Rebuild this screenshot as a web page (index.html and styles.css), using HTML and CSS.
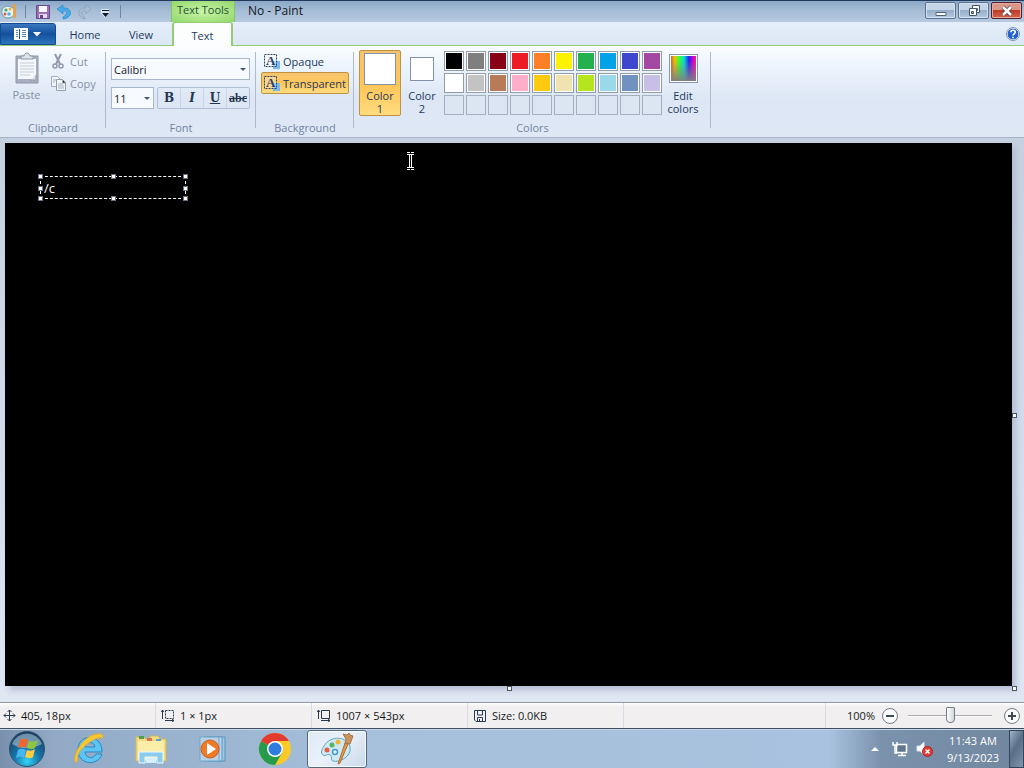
FILE: index.html
```html
<!DOCTYPE html>
<html lang="en">
<head>
<meta charset="utf-8">
<title>No - Paint</title>
<link rel="stylesheet" href="styles.css">
</head>
<body>
<header class="titlebar">
  <div class="quick">
    <svg class="app-icon" width="18" height="20" viewBox="0 0 18 20"><path d="M3 6C6 3 13 4 14 8s-1 8-6 8-8-5-5-10z" fill="#e3f3f5" stroke="#6c9cae"/><circle cx="6" cy="8" r="1.6" fill="#51a45c"/><circle cx="10" cy="7" r="1.5" fill="#e7b23d"/><circle cx="5" cy="12" r="1.5" fill="#d65b4b"/><circle cx="9" cy="12" r="1.8" fill="#60aee0"/><path d="M13 2h3v13l-2 2-1-3z" fill="#e5a24e"/></svg>
    <span class="bar"></span>
    <button class="qbtn" aria-label="Save"><svg width="16" height="16" viewBox="0 0 16 16"><path d="M2.500 1.500h13v13h-13z" fill="#9a70b4" stroke="#674b91"/><path d="M5 2h8v6H5z" fill="#f7f8ff"/><path d="M5 10h8v4H5z" fill="#e6d9ef"/><path d="M6 11h3v3H6z" fill="#624284"/></svg></button>
    <button class="qbtn" aria-label="Undo"><svg width="16" height="16" viewBox="0 0 16 16"><path d="M8 1 2 5l6 5V7c4-1 5 3 0 6v2c10-1 10-12 0-11z" fill="#4ba9e7" stroke="#2c8fd3" stroke-width=".8"/></svg></button>
    <button class="qbtn" aria-label="Redo" disabled><svg width="16" height="16" viewBox="0 0 16 16"><path d="m10 1 5 4-5 5V7c-5-1-6 3-1 6v2C1 14 0 3 10 4z" fill="#a8bbd1" stroke="#8da4bf" stroke-width=".8"/></svg></button>
    <button class="qbtn" aria-label="Customize Quick Access Toolbar"><svg width="16" height="16" viewBox="0 0 16 16"><path d="M4 5h8v3H4zM3 8h10l-5 6z" fill="#dce7f4"/><path d="M5 6h7v1H5zM5 9h7l-3.500 4z" fill="#101c30"/></svg></button>
    <span class="bar"></span>
  </div>
  <div class="context-title">Text Tools</div>
  <h1 class="title">No - Paint</h1>
  <div class="window-buttons">
    <button class="wbtn" aria-label="Minimize"><svg width="14" height="12" viewBox="0 0 14 12"><path d="M2 7.500h10v3H2z" fill="#fff" stroke="#52647d"/></svg></button>
    <button class="wbtn" aria-label="Restore"><svg width="14" height="12" viewBox="0 0 14 12"><path d="M5.500.5h7v7h-7z" fill="#fff" stroke="#44566f"/><path d="M8.500 3.500h2v2h-2z" fill="#9fb3cb" stroke="#44566f"/><path d="M2.500 3.500h7v7h-7z" fill="#fff" stroke="#44566f"/><path d="M4.500 6.500h2v2h-2z" fill="#9fb3cb" stroke="#44566f"/></svg></button>
    <button class="wbtn close" aria-label="Close"><svg width="14" height="12" viewBox="0 0 14 12"><path d="m3 2 8 8M11 2l-8 8" stroke="#613a41" stroke-width="4"/><path d="m3 2 8 8M11 2l-8 8" stroke="#fff" stroke-width="2.500"/></svg></button>
  </div>
</header>

<nav class="tabs">
  <button class="file-tab" aria-label="Paint menu"><svg width="30" height="12" viewBox="0 0 30 12"><path d="M1 0h14v12H1z" fill="#fff"/><path d="M3 2.500h2M3 4.500h2M3 6.500h2M3 8.500h2M9 2.500h4M9 4.500h4M9 6.500h4M9 8.500h4" stroke="#5a85b8"/><path d="M6.500 1v10" stroke="#1b559e"/><path d="M20 4h8l-4 4.500z" fill="#fff"/></svg></button>
  <button class="tab home">Home</button>
  <button class="tab view">View</button>
  <button class="tab active">Text</button>
  <button class="help" aria-label="Help"><svg width="14" height="14" viewBox="0 0 14 14"><circle cx="7" cy="7" r="6" fill="#2564ce" stroke="#fff"/><circle cx="7" cy="7" r="6.500" fill="none" stroke="#7d92b4"/><path d="M4.800 5.300c0-3 4.600-2.600 4.500 0C9.300 6.700 7 6.800 7 8.500M7 9.800v1.500" fill="none" stroke="#fff" stroke-width="1.600"/></svg></button>
</nav>

<section class="ribbon">
  <div class="group clipboard">
    <div class="group-body">
      <button class="paste" disabled><svg width="28" height="32" viewBox="0 0 28 32"><path d="M3 4h22v27H3z" fill="#a6b0bf" stroke="#8e98a8"/><path d="M5 7h18v20H5z" fill="#f4f7fc"/><path d="M8 7V4h3c0-4 6-4 6 0h3v3z" fill="#dce2eb" stroke="#8c97a6"/><path d="M7 11h14M7 14h14M7 17h14M7 20h14M7 23h10" stroke="#c5ccd8"/><path d="M17 28h6v-5" fill="#d9e0eb" stroke="#8e98a8"/></svg><span>Paste</span></button>
      <div class="stack">
        <button class="cmd" disabled><svg width="16" height="16" viewBox="0 0 16 16"><path d="m4 1 5 10M10 1 5 11" stroke="#8f99a9" stroke-width="2"/><circle cx="4" cy="13" r="2" fill="none" stroke="#8f99a9" stroke-width="1.500"/><circle cx="10" cy="13" r="2" fill="none" stroke="#8f99a9" stroke-width="1.500"/></svg>Cut</button>
        <button class="cmd" disabled><svg width="16" height="16" viewBox="0 0 16 16"><path d="M.5 1.500h6l3 3v7h-9z" fill="#f1f5fa" stroke="#a3adbb"/><path d="M5.500 4.500h6l3 3v8h-9z" fill="#f5f8fc" stroke="#929dac"/><path d="M11.500 5v3h3M2 5h3M2 7h2M7 9h5M7 11h6M7 13h6" stroke="#a3adbb"/></svg>Copy</button>
      </div>
    </div>
    <h2 class="group-name">Clipboard</h2>
  </div>
  <div class="group font">
    <div class="font-body">
      <span class="combo"><select aria-label="Font family"><option>Calibri</option></select></span>
      <div class="font-row">
        <span class="combo size"><select aria-label="Font size"><option>11</option></select></span>
        <div class="styles">
          <button class="bold">B</button><button class="italic">I</button><button class="underline">U</button><button class="strike">abc</button>
        </div>
      </div>
    </div>
    <h2 class="group-name">Font</h2>
  </div>
  <div class="group background">
    <div class="background-body">
      <button class="mode"><svg width="17" height="16" viewBox="0 0 17 16"><path d="M9 8h7v8H9z" fill="#79b8f2"/><path d="M.5 1.500h12v12H.5z" fill="#f4f9ff" fill-opacity=".5" stroke="#28405f" stroke-dasharray="2 1"/><text class="icon-letter" x="2" y="12">A</text></svg>Opaque</button>
      <button class="mode selected"><svg width="17" height="16" viewBox="0 0 17 16"><path d="M9 8h7v8H9z" fill="#79b8f2"/><path d="M.5 1.500h12v12H.5z" fill="#f4f9ff" fill-opacity=".3" stroke="#28405f" stroke-dasharray="2 1"/><text class="icon-letter" x="2" y="12">A</text></svg>Transparent</button>
    </div>
    <h2 class="group-name">Background</h2>
  </div>
  <div class="group colors">
    <div class="group-body colors-body">
      <button class="color-slot chosen"><i class="chip large"></i><span>Color<br>1</span></button>
      <button class="color-slot"><i class="chip"></i><span>Color<br>2</span></button>
      <div class="palette">
        <button class="c01" aria-label="Black"></button><button class="c02" aria-label="Gray"></button><button class="c03" aria-label="Dark red"></button><button class="c04" aria-label="Red"></button><button class="c05" aria-label="Orange"></button><button class="c06" aria-label="Yellow"></button><button class="c07" aria-label="Green"></button><button class="c08" aria-label="Turquoise"></button><button class="c09" aria-label="Indigo"></button><button class="c10" aria-label="Purple"></button>
        <button class="c11" aria-label="White"></button><button class="c12" aria-label="Light gray"></button><button class="c13" aria-label="Brown"></button><button class="c14" aria-label="Rose"></button><button class="c15" aria-label="Gold"></button><button class="c16" aria-label="Light yellow"></button><button class="c17" aria-label="Lime"></button><button class="c18" aria-label="Light turquoise"></button><button class="c19" aria-label="Blue gray"></button><button class="c20" aria-label="Lavender"></button>
        <button class="empty" aria-label="Custom 1"></button><button class="empty" aria-label="Custom 2"></button><button class="empty" aria-label="Custom 3"></button><button class="empty" aria-label="Custom 4"></button><button class="empty" aria-label="Custom 5"></button><button class="empty" aria-label="Custom 6"></button><button class="empty" aria-label="Custom 7"></button><button class="empty" aria-label="Custom 8"></button><button class="empty" aria-label="Custom 9"></button><button class="empty" aria-label="Custom 10"></button>
      </div>
      <button class="edit"><i class="spectrum"></i><span>Edit<br>colors</span></button>
    </div>
    <h2 class="group-name">Colors</h2>
  </div>
</section>

<main class="workspace">
  <div class="canvas">
    <div class="textbox">
      <input type="text" value="/c" aria-label="Canvas text">
      <i class="h nw"></i><i class="h n"></i><i class="h ne"></i><i class="h w"></i><i class="h e"></i><i class="h sw"></i><i class="h s"></i><i class="h se"></i>
    </div>
    <svg class="cursor" width="9" height="18" viewBox="0 0 9 18"><path d="M1 .5h3M5 .5h3M1 2.500h7M1 15.500h7M1 17.500h3M5 17.500h3M3.500 2v14M5.500 2v14" stroke="#fff"/></svg>
    <i class="grip right"></i><i class="grip bottom"></i><i class="grip corner"></i>
  </div>
</main>

<footer class="status">
  <div class="cell"><svg width="13" height="13" viewBox="0 0 13 13"><path d="M1 6.500h11M6.500 1v11M3 4.500l-2 2 2 2M10 4.500l2 2-2 2M4.500 3l2-2 2 2M4.500 10l2 2 2-2" fill="none" stroke="#293b52"/></svg>405, 18px</div>
  <div class="cell"><svg width="14" height="13" viewBox="0 0 14 13"><path d="M4.500 1.500h8v8h-8z" fill="none" stroke="#293b52" stroke-dasharray="2 1"/><path d="M1.500 10V1M0 3l1.500-2L3 3M4 11.500h9M11 10l2 1.500-2 1.500" fill="none" stroke="#293b52"/></svg>1 × 1px</div>
  <div class="cell"><svg width="14" height="13" viewBox="0 0 14 13"><path d="M4.500 1.500h8v8h-8z" fill="none" stroke="#293b52"/><path d="M1.500 10V1M0 3l1.500-2L3 3M4 11.500h9M11 10l2 1.500-2 1.500" fill="none" stroke="#293b52"/></svg>1007 × 543px</div>
  <div class="cell"><svg width="14" height="12" viewBox="0 0 14 12"><path d="M1.500.5h11v11H3l-1.500-1.500zM4.500 1v4h5V1M4.500 11V7.500h5V11M6.500 9v2" fill="none" stroke="#293b52"/></svg>Size: 0.0KB</div>
  <div class="cell blank"></div>
  <div class="zoom">
    <label for="zoom">100%</label>
    <button class="round" aria-label="Zoom out"><svg width="16" height="16" viewBox="0 0 16 16"><circle cx="8" cy="8" r="7.500" fill="#f9fafb" stroke="#777c84"/><path d="M4 8h8" stroke="#414952" stroke-width="2"/></svg></button>
    <input id="zoom" type="range" min="0" max="100" value="50">
    <button class="round" aria-label="Zoom in"><svg width="16" height="16" viewBox="0 0 16 16"><circle cx="8" cy="8" r="7.500" fill="#f9fafb" stroke="#777c84"/><path d="M4 8h8M8 4v8" stroke="#414952" stroke-width="2"/></svg></button>
  </div>
</footer>

<nav class="taskbar">
  <button class="start" aria-label="Start"><svg width="38" height="38" viewBox="0 0 38 38"><defs><radialGradient id="orb" cx=".5" cy=".85" r=".8"><stop offset="0" stop-color="#35d3f4"/><stop offset=".45" stop-color="#1677ac"/><stop offset="1" stop-color="#1b3f62"/></radialGradient></defs><circle cx="19" cy="19" r="17.500" fill="url(#orb)" stroke="#2f526f"/><path d="M4 14a16 16 0 0 1 30 0c-9 5-21 6-30 0z" fill="#b7cedb" opacity=".55"/><path d="M12 10c3-2 6-1 8 0l-2 8c-3-2-5-1-8 0z" fill="#ef672e"/><path d="M21 11c3 1 5 1 9-1l-3 8c-3 2-5 1-8 0z" fill="#8fc63e"/><path d="M10 20c3-2 5-1 8 0l-2 8c-3-2-5-1-8 0z" fill="#47b5ee"/><path d="M19 20c3 1 5 1 8-1l-2 8c-3 2-5 1-8 0z" fill="#ffcd42"/></svg></button>
  <button class="task" aria-label="Internet Explorer"><svg width="34" height="34" viewBox="0 0 34 34"><path d="M6 18C6 0 31 2 30 20H13c1 7 9 7 11 2h6C26 35 6 33 6 18zM13 15h10c-1-6-9-6-10 0z" fill="#5cc4f2" fill-rule="evenodd" stroke="#2789c5"/><path d="M4 31C-2 24 14-1 29 2c3 1 2 3 1 5C30 1 2 17 6 28z" fill="#f5c636" stroke="#d9a62d" stroke-width=".7"/></svg></button>
  <button class="task" aria-label="Windows Explorer"><svg width="34" height="34" viewBox="0 0 34 34"><path d="M2 5h8l2 2h4V4h8l2 3h6v22H2z" fill="#f4dc82" stroke="#d4b75a"/><path d="M4 9h26v18H4z" fill="#faeea9"/><path d="M5 4h5v3H5z" fill="#579b4e"/><path d="M13 6h5v3h-5z" fill="#da7448"/><path d="M22 7h5v2h-5z" fill="#58a1db"/><path d="M5 20h24v11h-6v-6H11v6H5z" fill="#8acbee" stroke="#eafaff"/><path d="M12 26h10v5H12z" fill="#d4efff"/></svg></button>
  <button class="task" aria-label="Media Player"><svg width="34" height="34" viewBox="0 0 34 34"><path d="M12 5h17v24H12z" fill="#9dc7e5" stroke="#5593bd"/><path d="M8 5h18v24H8z" fill="#b8d7ee" stroke="#6099c1"/><path d="M4 5h19v24H4z" fill="#b6d1e8" stroke="#70a5c9"/><circle cx="14" cy="17" r="9" fill="#f17b25" stroke="#cc5f1a"/><path d="m11 11 9 6-9 6z" fill="#fff"/></svg></button>
  <button class="task" aria-label="Chrome"><svg width="34" height="34" viewBox="0 0 34 34"><circle cx="17" cy="17" r="16" fill="#fbc928"/><path d="M17 17 3.100 9A16 16 0 0 0 17 33l7-12z" fill="#269b4c"/><path d="M17 17 3.100 9a16 16 0 0 1 27.800 0H17z" fill="#e43b30"/><circle cx="17" cy="17" r="8" fill="#fff"/><circle cx="17" cy="17" r="6.500" fill="#2e7cdf"/></svg></button>
  <button class="task current" aria-label="Paint"><svg width="38" height="34" viewBox="0 0 38 34"><path d="M6 14C12 3 30 4 32 15c2 9-10 16-17 14-3-1 0-5-3-6-3-2-4 2-7 0-3-2-1-6 1-9z" fill="#cde9f4" stroke="#60a4bf"/><circle cx="9" cy="18" r="2.500" fill="#e45d45"/><circle cx="14" cy="13" r="2.500" fill="#58b461"/><circle cx="20" cy="10" r="2.500" fill="#f1b436"/><circle cx="17" cy="20" r="2.500" fill="#dff6ff" stroke="#439bc9" stroke-width="1.500"/><path d="m20 32 7-21 3 1-8 19z" fill="#df9846" stroke="#b66f35"/><path d="m27 11 1-4-3-5 4 1 2-2 1 2 3 1-3 8z" fill="#c9945c" stroke="#a57548"/></svg></button>
  <div class="tray">
    <button class="tray-btn" aria-label="Show hidden icons"><svg width="10" height="6" viewBox="0 0 10 6"><path d="m1 5 4-4 4 4z" fill="#fff"/></svg></button>
    <button class="tray-btn" aria-label="Network"><svg width="16" height="16" viewBox="0 0 16 16"><path d="M4.500 3.500h10v8h-10z" fill="#61778f" stroke="#fff" stroke-width="1.500"/><path d="M10 12v2M6 14.500h8M1 1v3h4V1M3 4v8h2" fill="none" stroke="#fff" stroke-width="1.500"/></svg></button>
    <button class="tray-btn" aria-label="Volume muted"><svg width="17" height="16" viewBox="0 0 17 16"><path d="M1 5h3l4-4v13l-4-4H1z" fill="#fff" stroke="#dce5ed"/><circle cx="11.500" cy="10.500" r="5" fill="#dc3c35" stroke="#b5212b"/><path d="m9.500 8.500 4 4M13.500 8.500l-4 4" stroke="#fff" stroke-width="1.500"/></svg></button>
    <time class="clock" datetime="2023-09-13T11:43">11:43 AM<br>9/13/2023</time>
    <button class="desktop" aria-label="Show desktop"></button>
  </div>
</nav>
</body>
</html>
```
FILE: styles.css
```css
* { box-sizing: border-box; }
html, body { height: 100%; margin: 0; }
body {
  display: flex;
  flex-direction: column;
  overflow: hidden;
  font: 11px/13px "Open Sans", "Noto Sans", sans-serif;
  color: #1e395b;
}
button, input, select { margin: 0; padding: 0; border: 0; background: none; font: inherit; color: inherit; }
button { display: flex; align-items: center; justify-content: center; }
h1, h2 { margin: 0; font: inherit; }
svg { display: block; flex: none; }

.titlebar {
  display: flex;
  height: 22px;
  flex: none;
  border-top: 1px solid #23395b;
  background: linear-gradient(#8ba8c8, #a5bcd5 45%, #b6cae0);
}
.quick { display: flex; align-items: center; width: 171px; flex: none; gap: 5px; }
.qbtn { width: 16px; }
.quick .bar { width: 1px; height: 13px; background: #71859f; margin: 0 3px 0 2px; }
.context-title {
  width: 64px;
  flex: none;
  text-align: center;
  line-height: 17px;
  border: solid #85c46a;
  border-width: 0 1px;
  background: radial-gradient(#c8f4a7, #93d86c);
  color: #245033;
}
.title { flex: 1; padding-left: 13px; font-size: 12px; line-height: 20px; color: #101722; }
.window-buttons { display: flex; gap: 2px; padding: 1px 2px 0 0; }
.wbtn {
  width: 31px;
  height: 17px;
  border: 1px solid #5b7391;
  border-radius: 2px;
  background: linear-gradient(#c4d5e8 45%, #96adc9 50%, #b5cae0);
  box-shadow: inset 0 0 0 1px #d3e0ee;
}
.wbtn.close { border-color: #51202a; background: linear-gradient(#dc9688 45%, #bb3c29 50%, #d4664d); box-shadow: inset 0 0 0 1px #e4aaa0; }

.tabs { display: flex; flex: none; height: 24px; border-bottom: 1px solid #92cd76; background: linear-gradient(#e5eefa, #dce7f5); }
.file-tab {
  width: 56px;
  margin-top: 1px;
  border: 1px solid #174a8c;
  border-radius: 0 3px 0 0;
  background: linear-gradient(#3977bf, #15509d 50%, #2b75bd);
}
.tab { width: 54px; padding-top: 2px; }
.tab.home { width: 58px; }
.tab.active {
  width: 61px;
  height: 24px;
  margin-left: 4px;
  border: solid #92cd76;
  border-width: 1px 2px 0;
  border-radius: 3px 3px 0 0;
  background: #fcfefe;
}
.help { margin-left: auto; padding: 0 4px 0 0; }

.ribbon {
  display: flex;
  flex: none;
  height: 92px;
  border-bottom: 1px solid #a4b3c5;
  background: linear-gradient(#fbfdff, #edf5fd 20%, #dce6f4 60%, #dfe9f6);
}
.group { display: flex; flex-direction: column; position: relative; flex: none; }
.group::after { content: ""; position: absolute; right: 0; top: 6px; bottom: 9px; width: 1px; background: #afbaca; }
.group-name { margin-top: auto; padding-bottom: 2px; line-height: 14px; text-align: center; color: #7384a0; }
.group-body { display: flex; }
.clipboard { width: 106px; }
.font { width: 150px; }
.background { width: 98px; }
.colors { width: 357px; }
.paste { flex-direction: column; width: 51px; padding: 6px 0 0 2px; gap: 4px; color: #8792a3; }
.stack { padding-top: 4px; }
.cmd { justify-content: flex-start; height: 22px; gap: 3px; color: #8792a3; }
.font-body { padding: 12px 6px 0 5px; }
.combo { display: block; position: relative; }
.combo select {
  display: block;
  appearance: none;
  width: 100%;
  height: 22px;
  padding-left: 2px;
  border: 1px solid #a7b8ce;
  background: #f7fbff;
  color: #17202d;
}
.combo::after { content: ""; position: absolute; right: 4px; top: 10px; border: 3px solid transparent; border-top-color: #455a75; pointer-events: none; }
.font-row { display: flex; gap: 3px; margin-top: 7px; }
.size { width: 43px; }
.styles { display: flex; flex: 1; border: 1px solid #b1c1d5; border-radius: 2px; }
.styles button { flex: 1 1 0; font: bold 12px/18px "DejaVu Serif", serif; color: #263650; border-left: 1px solid #c8d4e3; }
.styles button:first-child { border: 0; }
.styles .italic { font-style: italic; }
.styles .underline { text-decoration: underline; }
.styles .strike { font: bold 12px/18px "Liberation Serif", serif; text-decoration: line-through; }
.background-body { padding: 4px 5px 0; }
.mode { justify-content: flex-start; width: 100%; height: 22px; padding-left: 2px; gap: 2px; border: 1px solid transparent; border-radius: 2px; }
.icon-letter { font: bold 13px "Liberation Serif", serif; fill: #28405f; }
.selected, .chosen { border: 1px solid #c29142; background: linear-gradient(#f5c46d, #ffc75a 55%, #ffdc80); }
.colors-body { padding-left: 5px; }
.color-slot { flex-direction: column; justify-content: flex-start; width: 42px; height: 66px; margin-top: 4px; padding-top: 6px; gap: 6px; border-radius: 2px; }
.color-slot.chosen { padding-top: 2px; gap: 4px; }
.chip { width: 24px; height: 24px; margin-bottom: 2px; border: 1px solid #8291a8; background: #fff; }
.color-slot:not(.chosen) { border: 1px solid transparent; }
.chip.large { width: 32px; height: 32px; margin: 0; }
.palette { display: grid; grid-template-columns: repeat(10, 20px); gap: 2px; align-content: start; padding: 5px 0 0 1px; }
.palette button { height: 20px; border: 1px solid #939da9; background: #fff; box-shadow: inset 0 0 0 1px #fff; }
.palette .empty { background: #dce6f3; box-shadow: none; border-color: #a4afbf; }
.palette .c01 { background: #000; }
.palette .c02 { background: #7f7f7f; }
.palette .c03 { background: #880015; }
.palette .c04 { background: #ed1c24; }
.palette .c05 { background: #ff7f27; }
.palette .c06 { background: #fff200; }
.palette .c07 { background: #22b14c; }
.palette .c08 { background: #00a2e8; }
.palette .c09 { background: #3f48cc; }
.palette .c10 { background: #a349a4; }
.palette .c12 { background: #c3c3c3; }
.palette .c13 { background: #b97a57; }
.palette .c14 { background: #ffaec9; }
.palette .c15 { background: #ffc90e; }
.palette .c16 { background: #efe4b0; }
.palette .c17 { background: #b5e61d; }
.palette .c18 { background: #99d9ea; }
.palette .c19 { background: #7092be; }
.palette .c20 { background: #c8bfe7; }
.edit { flex-direction: column; justify-content: flex-start; width: 42px; padding-top: 8px; gap: 6px; }
.spectrum {
  width: 29px;
  height: 29px;
  border: 1px solid #8997aa;
  box-shadow: inset 0 0 0 1px #fff;
  background: linear-gradient(transparent 20%, #808080), linear-gradient(90deg, #d44, #e8c500 18%, #3f3 35%, #08d6df 53%, #2820e8 70%, #e400cf 88%, #f34);
}

.workspace { flex: 1; min-height: 0; display: flex; padding: 5px 12px 16px 5px; background: linear-gradient(#c5d1e0, #d2dbeb 50%, #dfe7f3); }
.canvas { position: relative; flex: 1; background: #000; box-shadow: 4px 4px 6px #b3bdd2; }
.textbox { position: absolute; left: 35px; top: 33px; width: 146px; height: 23px; border: 1px dashed #fff; }
.textbox input { display: block; width: 100%; height: 100%; padding-left: 3px; color: #fff; font: 13px/20px "Open Sans", sans-serif; outline: 0; }
.h, .grip { position: absolute; width: 5px; height: 5px; border: 1px solid #687387; background: #fff; }
.nw, .w, .sw { left: -3px; }
.n, .s { left: calc(50% - 2px); }
.ne, .e, .se { right: -3px; }
.nw, .n, .ne { top: -3px; }
.w, .e { top: calc(50% - 2px); }
.sw, .s, .se { bottom: -3px; }
.cursor { position: absolute; left: 401px; top: 9px; }
.grip { border-color: #49566a; }
.right { right: -5px; top: calc(50% - 2px); }
.bottom { bottom: -5px; left: calc(50% - 2px); }
.corner { right: -5px; bottom: -5px; }

.status { display: flex; flex: none; height: 27px; border-top: 1px solid #8e99a8; border-bottom: 1px solid #3d4e65; background: linear-gradient(#fff, #f1eff0 4px, #f1eff0); color: #151a21; }
.cell { display: flex; align-items: center; gap: 5px; width: 156px; padding-left: 5px; border-right: 1px solid #d8dde5; }
.cell:first-child { padding-left: 3px; }
.cell.blank { flex: 1; }
.zoom { display: flex; align-items: center; justify-content: flex-end; width: 198px; gap: 7px; padding-right: 4px; }
.zoom input { appearance: none; width: 84px; height: 20px; margin: 0 5px 0 3px; }
.zoom input::-webkit-slider-runnable-track { height: 2px; background: #aaa; border-bottom: 1px solid #fff; }
.zoom input::-webkit-slider-thumb { appearance: none; width: 9px; height: 16px; margin-top: -8px; border: 1px solid #737b86; border-radius: 1px 1px 4px 4px; background: linear-gradient(90deg, #fff, #d3d6da); }

.taskbar { display: flex; flex: none; height: 39px; border-top: 1px solid #c6d7e8; background: linear-gradient(90deg, #7890ab, #91a9c4 5%, #9bb4d0 20%, #a6c0dc 35%, #a8c2df 81%, #7b92ad 86%, #71879f); }
.start { width: 53px; margin-right: 6px; }
.task { width: 60px; margin-right: 2px; }
.current { border: 1px solid #53677e; border-radius: 3px; background: linear-gradient(135deg, #dfeaf5, #eaf1f9 45%, #c9d9eb); box-shadow: inset 0 0 0 1px #f8fbff; }
.tray { display: flex; margin-left: auto; align-items: center; color: #fff; }
.tray-btn { width: 25px; }
.clock { width: 72px; text-align: center; line-height: 17px; }
.desktop { width: 15px; height: 100%; border: 1px solid #30465f; background: linear-gradient(120deg, #a0b1c4, #586e87 45%, #8395aa); }
```
